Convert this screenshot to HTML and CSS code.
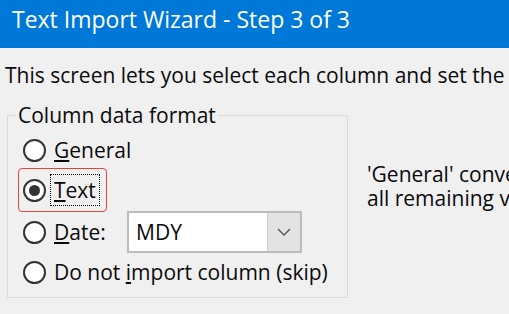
FILE: index.html
```html
<!DOCTYPE html>
<html>
<head>
<meta charset="utf-8">
<link rel="stylesheet" href="styles.css">
</head>
<body>
<div class="window">
  <div class="titlebar">Text Import Wizard - Step 3 of 3</div>
  <p class="intro">This screen lets you select each column and set the Data Format.</p>
  <div class="main">
    <div class="group">
      <span class="legend">Column data format</span>
      <div class="row row-general">
        <span class="radio"></span>
        <span class="label"><u>G</u>eneral</span>
      </div>
      <div class="row row-text highlight">
        <span class="radio checked"></span>
        <span class="label focus"><u>T</u>ext</span>
      </div>
      <div class="row row-date">
        <span class="radio"></span>
        <span class="label date-label"><u>D</u>ate:</span>
        <div class="combo">
          <span class="combo-value">MDY</span>
          <span class="combo-btn">
            <svg width="14" height="8" viewBox="0 0 14 8"><path d="M1 1 L7 7 L13 1" fill="none" stroke="#555" stroke-width="1.4"/></svg>
          </span>
        </div>
      </div>
      <div class="row row-skip">
        <span class="radio"></span>
        <span class="label">Do not <u>i</u>mport column (skip)</span>
      </div>
    </div>
    <div class="desc">'General' converts numeric values to numbers, date values to dates, and<br>all remaining values to text.</div>
  </div>
</div>
</body>
</html>
```

FILE: styles.css
```css
html, body {
  margin: 0;
  padding: 0;
  background: #f0f0f0;
  overflow: hidden;
}
.window {
  width: 509px;
  height: 314px;
  overflow: hidden;
  font-family: "Open Sans", "Noto Sans", sans-serif;
  color: #0a0a0a;
  font-size: 21px;
}
.titlebar {
  height: 48px;
  background: #0078d7;
  color: #ffffff;
  font-size: 23px;
  line-height: 38px;
  padding-left: 12px;
  white-space: nowrap;
  box-sizing: border-box;
}
.intro {
  margin: 0;
  padding: 14px 0 0 5px;
  height: 67px;
  box-sizing: border-box;
  line-height: 26px;
  white-space: nowrap;
}
.main {
  display: flex;
  align-items: flex-start;
  padding-left: 7px;
}
.group {
  position: relative;
  width: 341px;
  height: 183px;
  box-sizing: border-box;
  border: 1px solid #dcdcdc;
  padding: 16px 0 0 10px;
  flex: none;
}
.legend {
  position: absolute;
  left: 8px;
  top: -14px;
  padding: 0 2px;
  background: #f0f0f0;
  line-height: 26px;
  white-space: nowrap;
}
.row {
  display: flex;
  align-items: center;
  border: 1px solid transparent;
  border-radius: 4px;
  padding-left: 4px;
  box-sizing: border-box;
  white-space: nowrap;
}
.row-general { height: 36px; width: 89px; }
.row-text { height: 44px; width: 89px; }
.row-date { height: 42px; margin-top: -1px; }
.row-skip { height: 38px; }
.highlight {
  border-color: #e0463c;
}
.radio {
  width: 23px;
  height: 23px;
  box-sizing: border-box;
  border: 2px solid #333333;
  border-radius: 50%;
  background: #ffffff;
  flex: none;
  display: flex;
  align-items: center;
  justify-content: center;
  margin-right: 8px;
}
.radio.checked::after {
  content: "";
  width: 11px;
  height: 11px;
  border-radius: 50%;
  background: #333333;
}
.label {
  line-height: 26px;
}
.label.focus {
  outline: 1px dotted #000000;
  outline-offset: 0;
  padding: 2px 3px 2px 3px;
  margin-left: -3px;
}
.date-label {
  width: 73px;
}
.combo {
  display: flex;
  width: 175px;
  height: 42px;
  box-sizing: border-box;
  border: 2px solid #bcbcbc;
  background: #ffffff;
}
.combo-value {
  flex: 1;
  padding-left: 7px;
  line-height: 38px;
}
.combo-btn {
  width: 32px;
  background: #e3e3e3;
  border-left: 1px solid #cfcfcf;
  display: flex;
  align-items: center;
  justify-content: center;
}
.desc {
  margin: 47px 0 0 19px;
  line-height: 24px;
  white-space: nowrap;
}
```
